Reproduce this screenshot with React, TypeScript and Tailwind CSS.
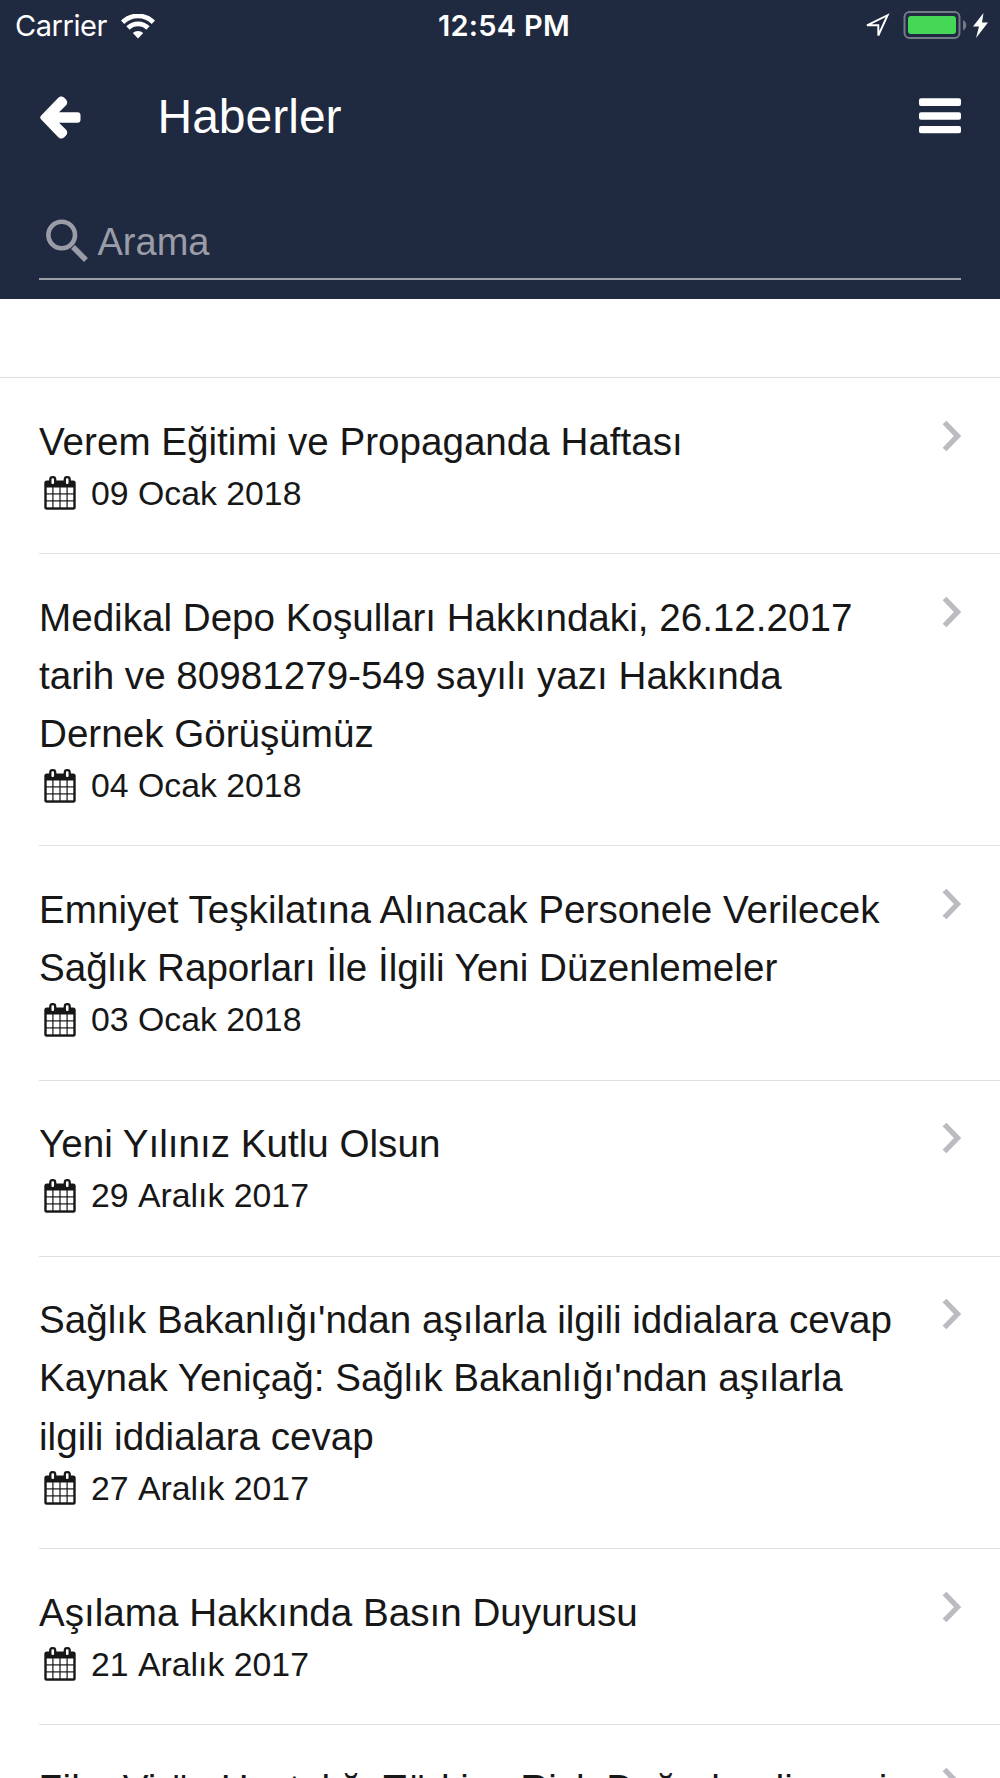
import { Fragment } from 'react'

type NewsItem = {
  title: string[]
  date: string
}

const news: NewsItem[] = [
  { title: ['Verem Eğitimi ve Propaganda Haftası'], date: '09 Ocak 2018' },
  {
    title: [
      'Medikal Depo Koşulları Hakkındaki, 26.12.2017',
      'tarih ve 80981279-549 sayılı yazı Hakkında',
      'Dernek Görüşümüz',
    ],
    date: '04 Ocak 2018',
  },
  {
    title: [
      'Emniyet Teşkilatına Alınacak Personele Verilecek',
      'Sağlık Raporları İle İlgili Yeni Düzenlemeler',
    ],
    date: '03 Ocak 2018',
  },
  { title: ['Yeni Yılınız Kutlu Olsun'], date: '29 Aralık 2017' },
  {
    title: [
      "Sağlık Bakanlığı'ndan aşılarla ilgili iddialara cevap",
      "Kaynak Yeniçağ: Sağlık Bakanlığı'ndan aşılarla",
      'ilgili iddialara cevap',
    ],
    date: '27 Aralık 2017',
  },
  { title: ['Aşılama Hakkında Basın Duyurusu'], date: '21 Aralık 2017' },
  { title: ['Zika Virüs Hastalığı Türkiye Risk Değerlendirmesi'], date: '20 Aralık 2017' },
]

function WifiIcon() {
  return (
    <svg className="ml-[14px] h-[25px] w-[34px]" viewBox="0 0 34 25" fill="none" stroke="white">
      <path d="M1.600 8.200a22 22 0 0 1 30.800 0" strokeWidth="4.700" />
      <path d="M7 14a14.300 14.300 0 0 1 20 0" strokeWidth="4.700" />
      <path d="M17 24.500l-5.200-5.400a7.500 7.500 0 0 1 10.400 0z" fill="white" stroke="none" />
    </svg>
  )
}

function StatusBar() {
  return (
    <div className="grid h-[50px] grid-cols-3 items-center font-['Inter',sans-serif] text-[29px] leading-[50px]">
      <div className="flex items-center pt-[1px] pl-[15px]">
        <span className="tracking-[-0.45px]">Carrier</span>
        <WifiIcon />
      </div>
      <div className="pt-[1px] pl-[8px] text-center font-semibold tracking-[0.25px]">12:54 PM</div>
      <div className="flex items-center justify-end pr-[11px]">
        <svg className="h-[30px] w-[126px]" viewBox="0 0 126 30">
          <path d="M4 14.300L24.600 4.200 15.300 24.500V14.300z" fill="none" stroke="white" strokeWidth="1.900" />
          <rect x="41.500" y="1" width="55" height="26" rx="5" fill="none" stroke="#737a88" strokeWidth="2" />
          <rect x="45" y="5" width="48" height="18" rx="3" fill="#45d856" />
          <path d="M100 9c4.300 2 4.300 8.500 0 10.500z" fill="#737a88" />
          <path d="M120.500 2l-10.500 13.500h6l-3 11.500 12-15.500h-6z" fill="white" />
        </svg>
      </div>
    </div>
  )
}

function CalendarIcon() {
  return (
    <svg className="h-[34px] w-[32px] shrink-0" viewBox="0 0 32 34">
      <rect x="0.300" y="4.500" width="31.400" height="29.200" rx="2.500" fill="#171717" />
      <g fill="white">
        {[11.5, 18.5, 25.5].map((y) => (
          <Fragment key={y}>
            <rect x="2.700" y={y} width="5.600" height="5.800" />
            <rect x="9.500" y={y} width="5.900" height="5.800" />
            <rect x="16.600" y={y} width="5.900" height="5.800" />
            <rect x="23.700" y={y} width="5.600" height="5.800" />
          </Fragment>
        ))}
      </g>
      <rect x="6.300" y="1.200" width="4.900" height="8" rx="2.200" fill="white" stroke="#171717" strokeWidth="2.300" />
      <rect x="20.800" y="1.200" width="4.900" height="8" rx="2.200" fill="white" stroke="#171717" strokeWidth="2.300" />
    </svg>
  )
}

function NewsRow({ item }: { item: NewsItem }) {
  return (
    <li className="ml-[39px] flex justify-between border-b border-[#e0e0e2] pt-[34.7px] pr-[38.5px] pb-[37.2px]">
      <div>
        <h2 className="text-[38.62px] leading-[58.15px] whitespace-nowrap">
          {item.title.map((line) => (
            <span key={line} className="block">
              {line}
            </span>
          ))}
        </h2>
        <div className="flex h-[45px] items-center pl-[5px]">
          <CalendarIcon />
          <span className="ml-[15px] text-[33.8px] leading-[45px] [font-kerning:none]">{item.date}</span>
        </div>
      </div>
      <svg className="mt-[7px] h-[32px] w-[20px] shrink-0" viewBox="0 0 20 32">
        <path d="M2.500 2.500L15.500 16 2.500 29.500" fill="none" stroke="#bcbbc1" strokeWidth="5.400" />
      </svg>
    </li>
  )
}

export default function App() {
  return (
    <div className="h-[1778px] w-[1000px] overflow-hidden bg-white font-['Liberation_Sans',Arial,sans-serif] text-[#171717]">
      <header className="h-[299px] bg-[#1f2940] text-white">
        <StatusBar />
        <div className="flex h-[132px] items-center px-[39px]">
          <button aria-label="Geri" className="ml-[1px] pt-[3px]">
            <svg className="h-[43px] w-[41px]" viewBox="0 0 41 43">
              <path
                d="M1.200 19.500L18.300 1.800c1.800-1.900 4.200-1.700 5.700-.2l2 2c1.700 1.800 1.600 4.200.1 5.700L19 16.200h18.500q3 0 3 3v4.600q0 3-3 3H19l7.100 6.900c1.500 1.500 1.600 3.900-.1 5.700l-2 2c-1.500 1.500-3.900 1.700-5.700-.2L1.200 23.500q-2-2 0-4z"
                fill="white"
              />
            </svg>
          </button>
          <h1 className="ml-[76.5px] pt-[2px] text-[48px]">Haberler</h1>
          <button aria-label="Menü" className="ml-auto">
            <svg className="h-[36px] w-[42px]" viewBox="0 0 42 36" fill="white">
              <rect y="0.300" width="42" height="7.700" rx="2" />
              <rect y="14.300" width="42" height="7.500" rx="2" />
              <rect y="28" width="42" height="7.300" rx="2" />
            </svg>
          </button>
        </div>
        <div className="mx-[39px] flex h-[98px] items-center border-b-2 border-[#9ca0ab] pt-[21px] text-[#9a9da8]">
          <svg className="ml-[7px] h-[44px] w-[43px]" viewBox="0 0 43 44" fill="none" stroke="currentColor">
            <circle cx="15.700" cy="16" r="13.300" strokeWidth="4.600" />
            <path d="M27 28l13 13" strokeWidth="5.500" />
          </svg>
          <span className="ml-[8.5px] pt-[4px] text-[38px]">Arama</span>
        </div>
      </header>
      <div className="h-[79px] border-b border-[#dedee0]" />
      <ul>
        {news.map((item) => (
          <NewsRow key={item.date} item={item} />
        ))}
      </ul>
    </div>
  )
}
